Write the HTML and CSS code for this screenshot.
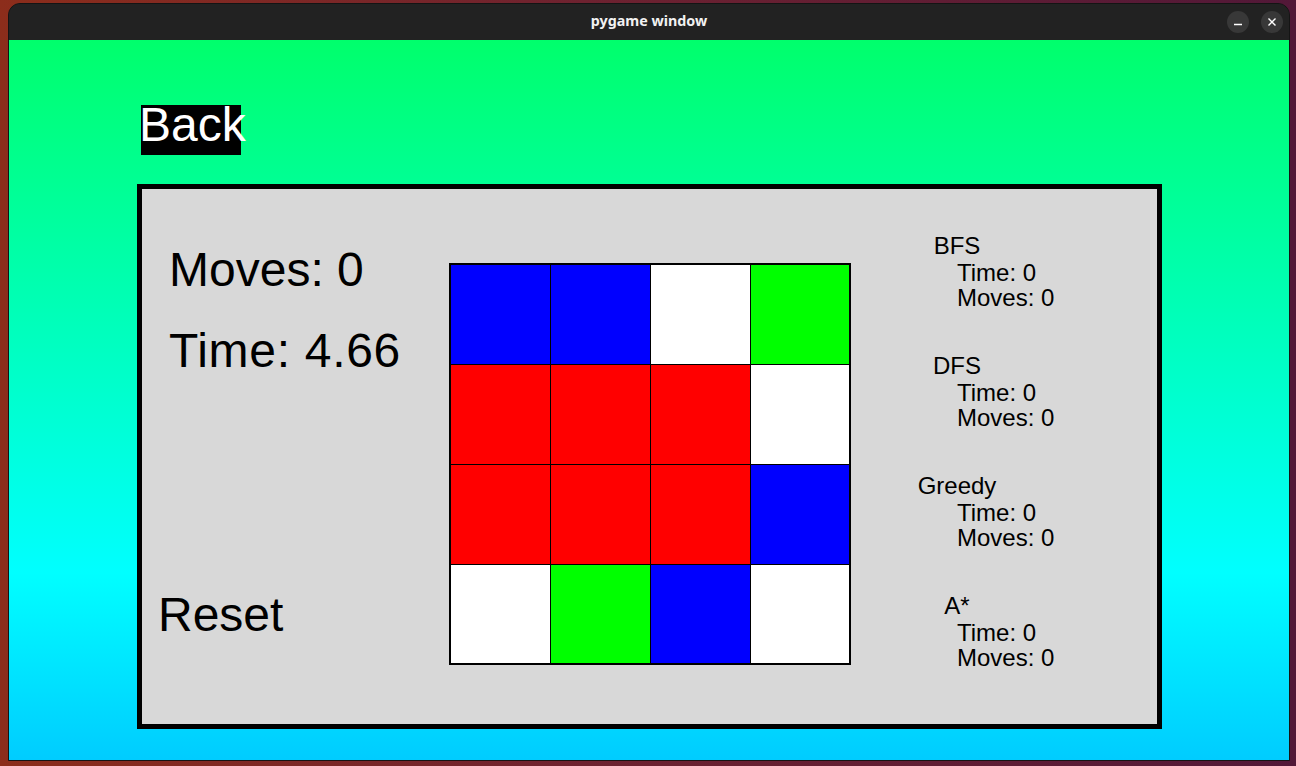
FILE: index.html
```html
<!DOCTYPE html>
<html lang="en">
<head>
<meta charset="utf-8">
<title>pygame window</title>
<link rel="stylesheet" href="styles.css">
</head>
<body>
<div class="window">
  <div class="titlebar">
    <div class="spacer"></div>
    <div class="title">pygame window</div>
    <div class="controls">
      <span class="ctl">
        <svg width="10" height="10" viewBox="0 0 10 10"><line x1="1" y1="7.5" x2="9" y2="7.5" stroke="#fff" stroke-width="1.4"/></svg>
      </span>
      <span class="ctl">
        <svg width="10" height="10" viewBox="0 0 10 10"><path d="M1.5 1.5 L8.5 8.5 M8.5 1.5 L1.5 8.5" stroke="#fff" stroke-width="1.4" fill="none"/></svg>
      </span>
    </div>
  </div>
  <div class="screen">
    <div class="back">Back</div>
    <div class="panel">
      <div class="stats">
        <div class="big moves">Moves: 0</div>
        <div class="big time">Time: 4.66</div>
        <div class="big reset">Reset</div>
      </div>
      <div class="board">
        <div class="cell blue"></div><div class="cell blue"></div><div class="cell white"></div><div class="cell green"></div>
        <div class="cell red"></div><div class="cell red"></div><div class="cell red"></div><div class="cell white"></div>
        <div class="cell red"></div><div class="cell red"></div><div class="cell red"></div><div class="cell blue"></div>
        <div class="cell white"></div><div class="cell green"></div><div class="cell blue"></div><div class="cell white"></div>
      </div>
      <div class="solvers">
        <div class="solver">
          <div class="label">BFS</div>
          <div class="line">Time: 0</div>
          <div class="line">Moves: 0</div>
        </div>
        <div class="solver">
          <div class="label">DFS</div>
          <div class="line">Time: 0</div>
          <div class="line">Moves: 0</div>
        </div>
        <div class="solver">
          <div class="label">Greedy</div>
          <div class="line">Time: 0</div>
          <div class="line">Moves: 0</div>
        </div>
        <div class="solver">
          <div class="label">A*</div>
          <div class="line">Time: 0</div>
          <div class="line">Moves: 0</div>
        </div>
      </div>
    </div>
  </div>
</div>
</body>
</html>
```

FILE: styles.css
```css
* { box-sizing: border-box; }

html, body {
  margin: 0;
  padding: 0;
}

body {
  width: 1296px;
  height: 766px;
  overflow: hidden;
  background: linear-gradient(90deg, #8c2d1b 0%, #6e2230 45%, #521838 100%);
  padding-top: 3px;
  padding-left: 8px;
  font-family: "Liberation Sans", Arial, sans-serif;
}

.window {
  width: 1282px;
  border: 1px solid #141414;
  border-radius: 12px 12px 0 0;
  overflow: hidden;
  background: #222222;
}

.titlebar {
  height: 36px;
  background: #222222;
  display: grid;
  grid-template-columns: 1fr auto 1fr;
  align-items: center;
}

.title {
  font-family: "Noto Sans", "DejaVu Sans", sans-serif;
  font-weight: 700;
  font-size: 14.3px;
  color: #f2f2f2;
  line-height: 1;
  padding-bottom: 1px;
}

.controls {
  justify-self: end;
  display: flex;
  gap: 12px;
  padding-right: 6px;
}

.ctl {
  width: 22px;
  height: 22px;
  border-radius: 50%;
  background: #383838;
  display: flex;
  align-items: center;
  justify-content: center;
}

.ctl svg { display: block; }

.screen {
  height: 720px;
  background: linear-gradient(180deg, #00ff6c 0%, #00ffa8 30%, #00ffff 74%, #00ccff 100%);
  padding-left: 128px;
  padding-top: 65px;
}

.back {
  margin-left: 4px;
  width: 100px;
  height: 50px;
  background: #000;
  color: #fff;
  font-size: 48px;
  line-height: 40px;
  text-indent: -2px;
  white-space: nowrap;
}

.panel {
  margin-top: 29px;
  width: 1025px;
  height: 545px;
  border: 5px solid #000;
  background: #d8d8d8;
  display: flex;
  align-items: flex-start;
  color: #000;
}

.stats {
  width: 307px;
  flex: none;
}

.big {
  font-size: 48px;
  line-height: 48px;
  white-space: nowrap;
}

.moves {
  margin-top: 57px;
  margin-left: 27px;
}

.time {
  margin-top: 33px;
  margin-left: 27px;
  letter-spacing: 0.7px;
}

.reset {
  margin-top: 216px;
  margin-left: 16px;
}

.board {
  flex: none;
  margin-top: 74px;
  border: 2px solid #000;
  background: #000;
  display: grid;
  grid-template-columns: 99px 99px 99px 98px;
  grid-template-rows: 99px 99px 99px 98px;
  gap: 1px;
}

.blue { background: #0000ff; }
.red { background: #ff0000; }
.green { background: #00ff00; }
.white { background: #ffffff; }

.solvers {
  flex: none;
  margin-left: 6px;
  margin-top: 45px;
  display: flex;
  flex-direction: column;
  gap: 44px;
}

.solver {
  width: 200px;
  font-size: 24px;
  white-space: nowrap;
}

.label {
  text-align: center;
  line-height: 24px;
  margin-bottom: 2px;
}

.line {
  padding-left: 100px;
  line-height: 25px;
}
```
